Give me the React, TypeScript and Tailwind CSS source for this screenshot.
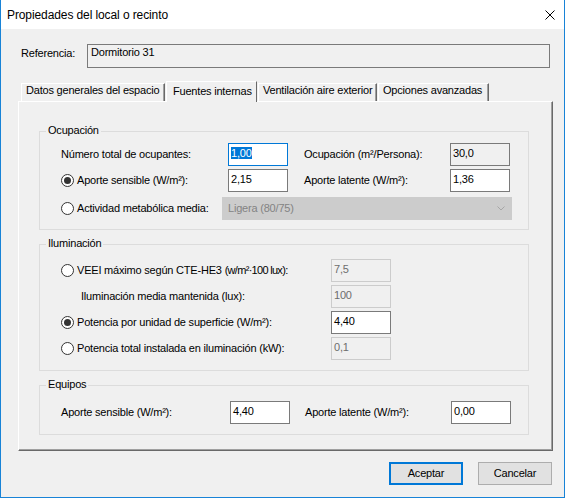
import React from "react";

type Variant = "normal" | "focus" | "readonly" | "disabled";

function Box({ value, variant = "normal", w = "w-[60px]" }: { value: string; variant?: Variant; w?: string }) {
  const styles: Record<Variant, string> = {
    normal: "border-[#7a7a7a] bg-white text-black",
    focus: "border-[#0078d7] bg-white text-black",
    readonly: "border-[#7a7a7a] bg-[#f0f0f0] text-black",
    disabled: "border-[#cccccc] bg-[#f0f0f0] text-[#6d6d6d]",
  };
  return (
    <div className={`${w} h-[23px] shrink-0 border pl-[2px] pt-[3px] leading-[13px] ${styles[variant]}`}>
      {variant === "focus" ? <span className="bg-[#0078d7] text-white">{value}</span> : value}
    </div>
  );
}

function Radio({ checked = false }: { checked?: boolean }) {
  return (
    <span className="w-[13px] h-[13px] rounded-full border border-[#333333] bg-white flex items-center justify-center shrink-0 mr-[3px]">
      {checked && <span className="w-[7px] h-[7px] rounded-full bg-[#333333]" />}
    </span>
  );
}

function Group({ title, className, children }: { title: string; className: string; children: React.ReactNode }) {
  return (
    <div className={`relative border border-[#dcdcdc] w-[490px] ml-[20px] shrink-0 ${className}`}>
      <span className="absolute left-[6px] top-[-8px] px-[2px] bg-[#f0f0f0] leading-[13px]">{title}</span>
      {children}
    </div>
  );
}

export default function App() {
  const tabs = [
    { label: "Datos generales del espacio", w: "w-[144px]", sel: false },
    { label: "Fuentes internas", w: "w-[91px]", sel: true },
    { label: "Ventilación aire exterior", w: "w-[119px]", sel: false },
    { label: "Opciones avanzadas", w: "w-[111px]", sel: false },
  ];
  return (
    <div className="w-[569px] h-[504px] bg-white font-['Liberation_Sans',Arial,sans-serif] text-[11px] leading-[13px] tracking-[-0.2px] text-black overflow-hidden">
      <div className="w-[565px] h-[498px] border-l border-r border-b border-[#1883d7] flex flex-col">
        {/* Title bar */}
        <div className="h-[29px] bg-white flex items-center shrink-0">
          <span className="flex-1 pl-[6px] pt-[1px] text-[12px] leading-[16px] tracking-[-0.1px]">
            Propiedades del local o recinto
          </span>
          <svg width="10" height="10" viewBox="0 0 10 10" className="mr-[9px]">
            <path d="M0.5 0.5 L9.5 9.5 M9.5 0.5 L0.5 9.5" stroke="#000" strokeWidth="1" />
          </svg>
        </div>
        {/* Body */}
        <div className="flex-1 bg-[#f0f0f0] flex flex-col">
          {/* Referencia */}
          <div className="flex items-start mt-[15px] pl-[20px]">
            <span className="w-[66px] pt-[3px]">Referencia:</span>
            <div className="w-[463px] h-[24px] border border-[#7a7a7a] bg-[#f0f0f0] pl-[3px] pt-[1px] leading-[13px]">
              Dormitorio 31
            </div>
          </div>
          {/* Tabs */}
          <div className="flex items-end gap-px ml-[20px] mt-[13px] h-[20px]">
            {tabs.map((t) =>
              t.sel ? (
                <div
                  key={t.label}
                  className={`${t.w} h-[21px] -mb-[1px] relative z-10 bg-[#f0f0f0] border-t border-l border-r border-t-white border-l-white border-r-[#696969] pl-[6px] pt-[3px] whitespace-nowrap`}
                >
                  {t.label}
                </div>
              ) : (
                <div
                  key={t.label}
                  className={`${t.w} h-[18px] border-t border-l border-r border-t-white border-l-white border-r-[#696969] shadow-[inset_-1px_0_0_#a0a0a0] pl-[4px] whitespace-nowrap overflow-hidden`}
                >
                  {t.label}
                </div>
              )
            )}
          </div>
          {/* Panel */}
          <div className="ml-[17px] w-[535px] h-[350px] border border-t-white border-l-white border-r-[#696969] border-b-[#696969] shadow-[inset_-1px_-1px_0_#a0a0a0] flex flex-col">
            <Group title="Ocupación" className="mt-[29px] h-[99px] pt-[11px] pl-[21px]">
              <div className="flex flex-col">
                <div className="flex items-center h-[23px]">
                  <span className="w-[167px]">Número total de ocupantes:</span>
                  <Box value="1,00" variant="focus" />
                  <span className="w-[146px] ml-[16px]">Ocupación (m²/Persona):</span>
                  <Box value="30,0" variant="readonly" />
                </div>
                <div className="flex items-center h-[23px] mt-[3px]">
                  <span className="w-[167px] flex items-center">
                    <Radio checked />
                    Aporte sensible (W/m²):
                  </span>
                  <Box value="2,15" />
                  <span className="w-[146px] ml-[16px]">Aporte latente (W/m²):</span>
                  <Box value="1,36" />
                </div>
                <div className="flex items-center h-[23px] mt-[5px]">
                  <span className="w-[161px] flex items-center">
                    <Radio />
                    Actividad metabólica media:
                  </span>
                  <div className="w-[290px] h-[23px] bg-[#cccccc] border border-[#cccccc] flex items-center pl-[5px] pr-[6px] text-[#838383]">
                    <span className="flex-1">Ligera (80/75)</span>
                    <svg width="8" height="5" viewBox="0 0 8 5">
                      <path d="M0.5 0.5 L4 4 L7.5 0.5" fill="none" stroke="#a6a6a6" strokeWidth="1" />
                    </svg>
                  </div>
                </div>
              </div>
            </Group>
            <Group title="Iluminación" className="mt-[14px] h-[127px] pt-[14px] pl-[21px]">
              <div className="flex flex-col gap-[3px]">
                <div className="flex items-center h-[23px]">
                  <span className="w-[270px] flex items-center whitespace-nowrap">
                    <Radio />
                    <span>
                      VEEI máximo según CTE-HE3 <span className="tracking-[-0.7px]">(w/m²·100 lux):</span>
                    </span>
                  </span>
                  <Box value="7,5" variant="disabled" />
                </div>
                <div className="flex items-center h-[23px]">
                  <span className="w-[270px] pl-[20px]">Iluminación media mantenida (lux):</span>
                  <Box value="100" variant="disabled" />
                </div>
                <div className="flex items-center h-[23px]">
                  <span className="w-[270px] flex items-center">
                    <Radio checked />
                    Potencia por unidad de superficie (W/m²):
                  </span>
                  <Box value="4,40" />
                </div>
                <div className="flex items-center h-[23px]">
                  <span className="w-[270px] flex items-center">
                    <Radio />
                    Potencia total instalada en iluminación (kW):
                  </span>
                  <Box value="0,1" variant="disabled" />
                </div>
              </div>
            </Group>
            <Group title="Equipos" className="mt-[14px] h-[50px] pt-[15px] pl-[21px]">
              <div className="flex items-center h-[23px]">
                <span className="w-[169px]">Aporte sensible (W/m²):</span>
                <Box value="4,40" />
                <span className="w-[146px] ml-[15px]">Aporte latente (W/m²):</span>
                <Box value="0,00" />
              </div>
            </Group>
          </div>
          {/* Buttons */}
          <div className="flex justify-end gap-[15px] mt-[11px] pr-[12px]">
            <button className="w-[74px] h-[23px] bg-[#e1e1e1] border-2 border-[#0078d7] leading-[13px]">
              Aceptar
            </button>
            <button className="w-[74px] h-[23px] bg-[#e1e1e1] border border-[#adadad] leading-[13px]">
              Cancelar
            </button>
          </div>
        </div>
      </div>
    </div>
  );
}
